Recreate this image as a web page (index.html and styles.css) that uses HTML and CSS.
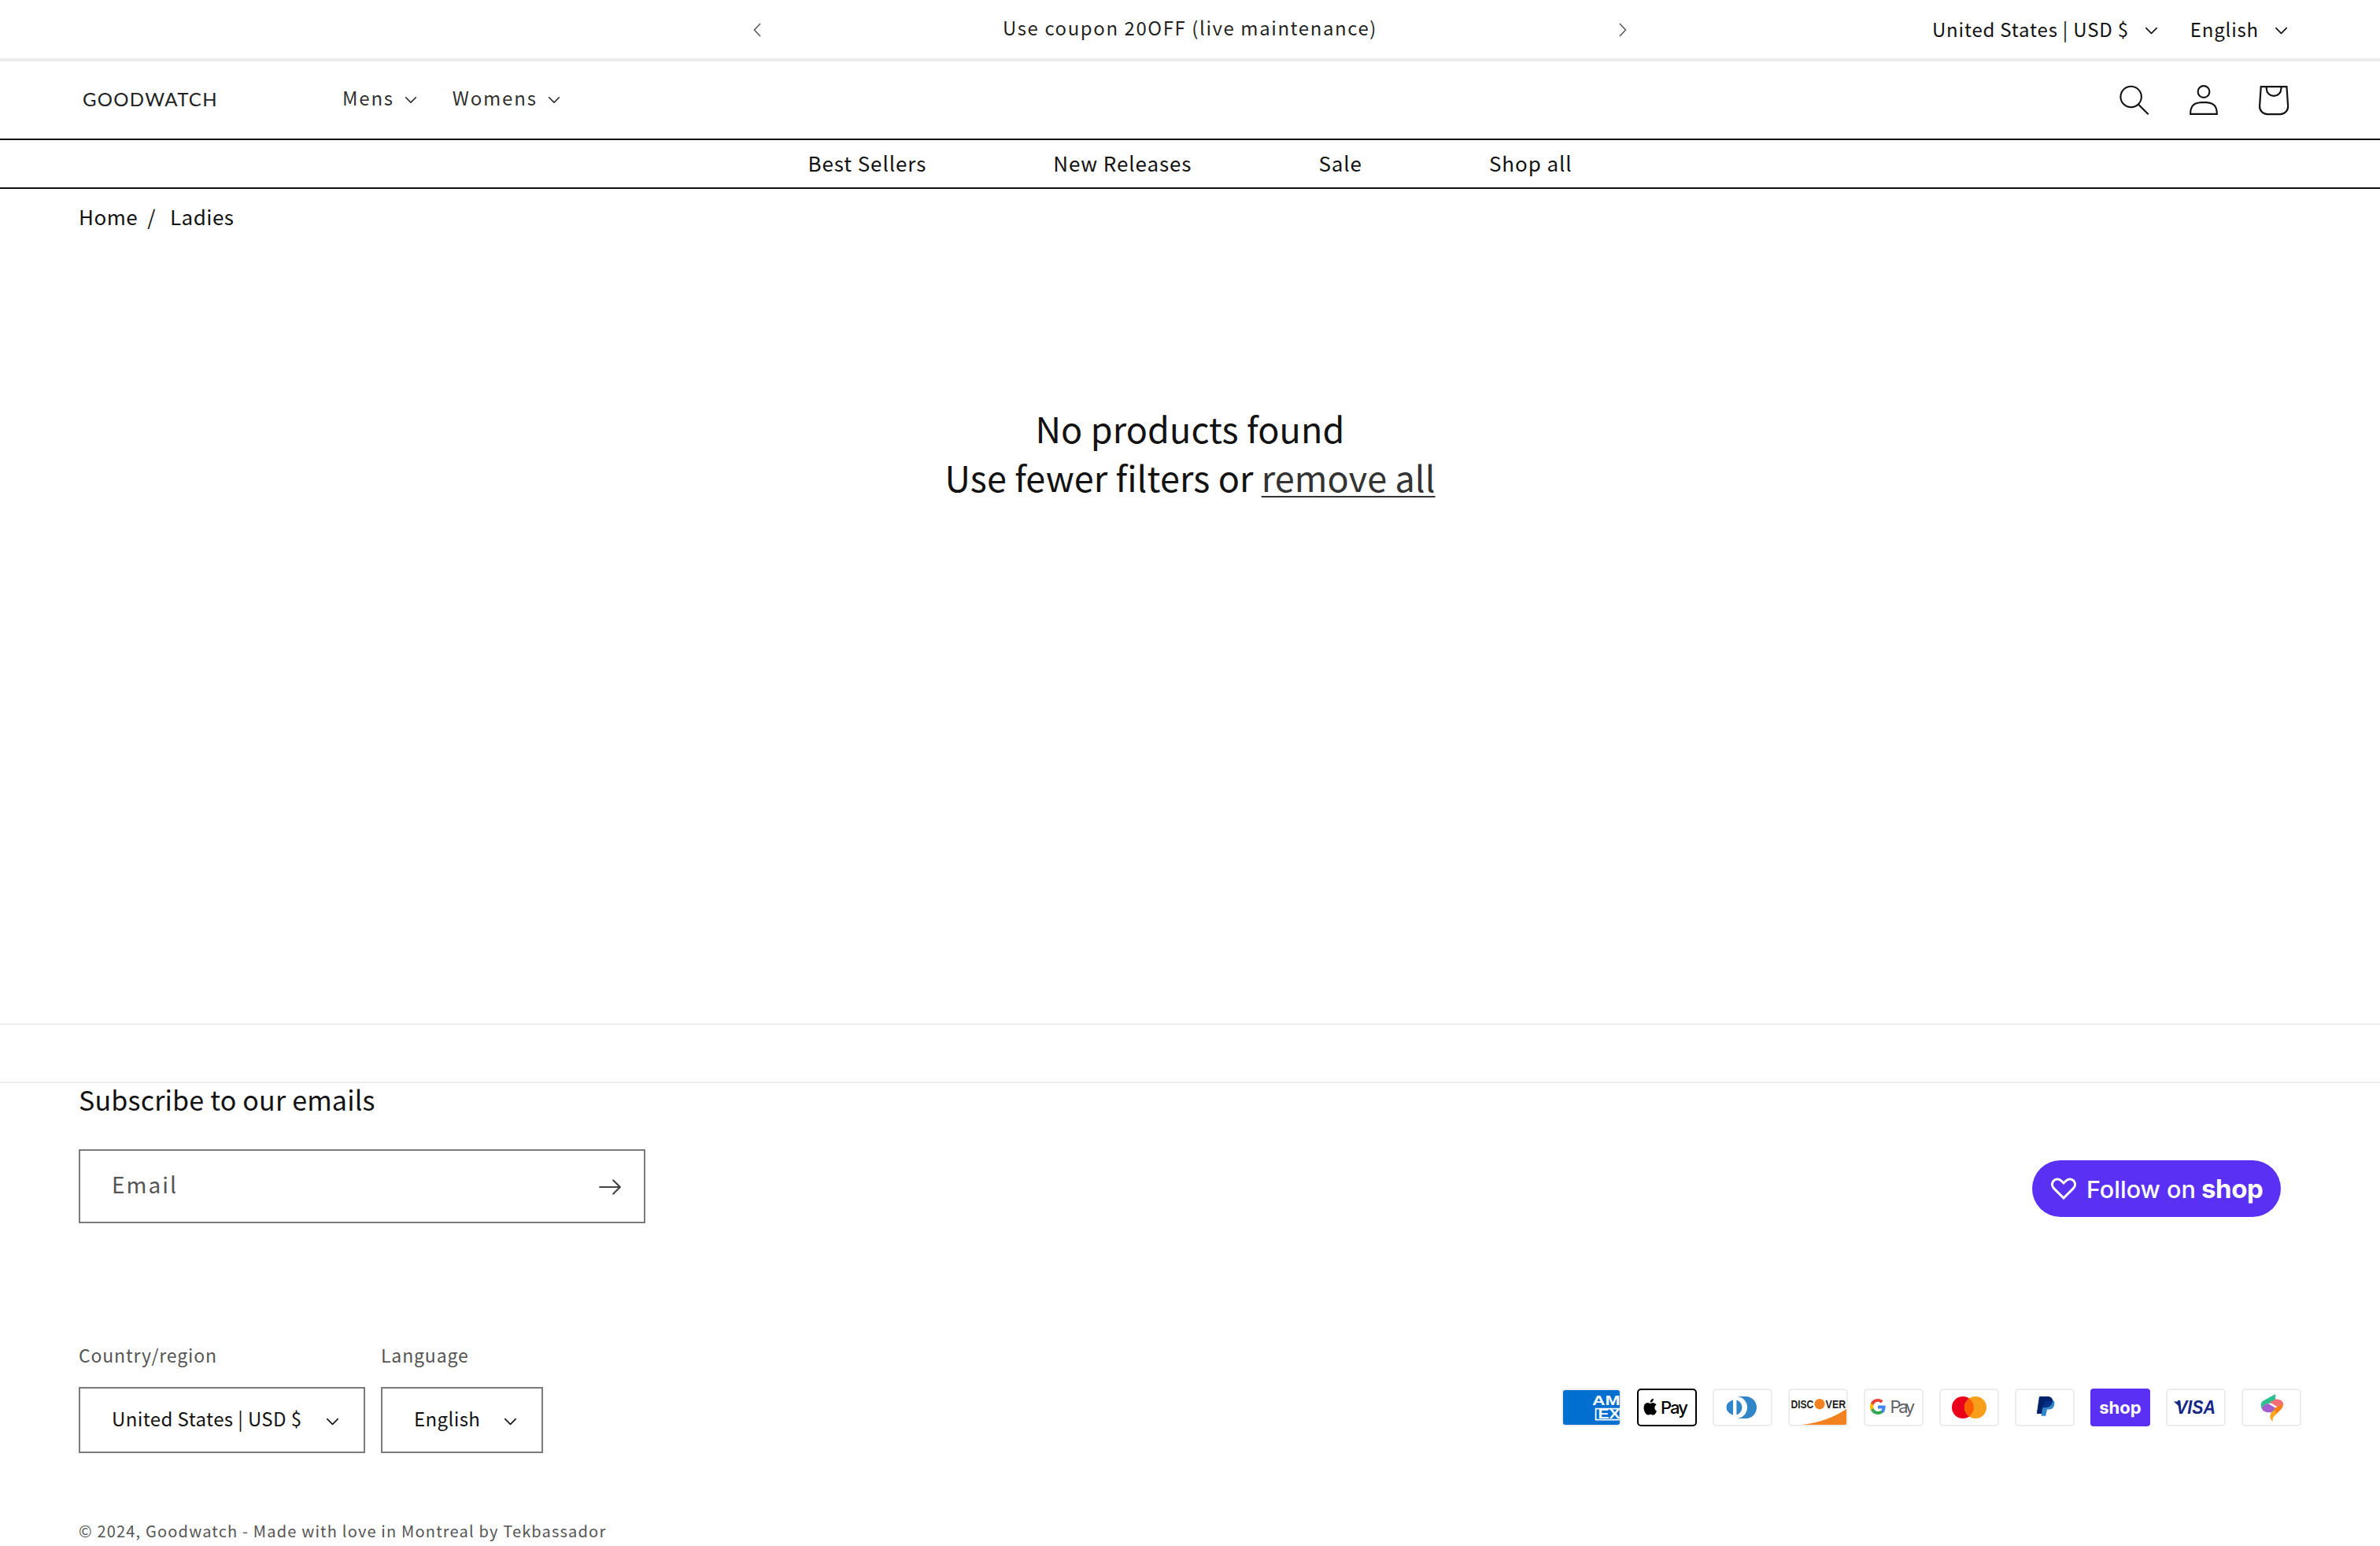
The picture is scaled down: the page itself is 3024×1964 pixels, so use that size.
FILE: index.html
```html
<!DOCTYPE html>
<html lang="en">
<head>
<meta charset="utf-8">
<title>Ladies – Goodwatch</title>
<link rel="stylesheet" href="styles.css">
</head>
<body>
<div class="announce">
  <div class="announce-slider">
    <svg class="chev" viewBox="0 0 10 18"><path d="M9 1 1.500 9 9 17" /></svg>
    <p class="announce-text">Use coupon 20OFF (live maintenance)</p>
    <svg class="chev" viewBox="0 0 10 18"><path d="M1 1 8.500 9 1 17" /></svg>
  </div>
  <div class="locale">
    <span class="locale-item">United States | USD $<svg class="caret" viewBox="0 0 10 6"><path d="M9.354.646a.5.5 0 00-.708 0L5 4.293 1.354.646a.5.5 0 00-.708.708l4 4a.5.5 0 00.708 0l4-4a.5.5 0 000-.708z"/></svg></span>
    <span class="locale-item">English<svg class="caret" viewBox="0 0 10 6"><path d="M9.354.646a.5.5 0 00-.708 0L5 4.293 1.354.646a.5.5 0 00-.708.708l4 4a.5.5 0 00.708 0l4-4a.5.5 0 000-.708z"/></svg></span>
  </div>
</div>
<header class="header">
  <a class="logo">GOODWATCH</a>
  <nav class="menu">
    <span class="menu-item">Mens<svg class="caret small" viewBox="0 0 10 6"><path d="M9.354.646a.5.5 0 00-.708 0L5 4.293 1.354.646a.5.5 0 00-.708.708l4 4a.5.5 0 00.708 0l4-4a.5.5 0 000-.708z"/></svg></span>
    <span class="menu-item">Womens<svg class="caret small" viewBox="0 0 10 6"><path d="M9.354.646a.5.5 0 00-.708 0L5 4.293 1.354.646a.5.5 0 00-.708.708l4 4a.5.5 0 00.708 0l4-4a.5.5 0 000-.708z"/></svg></span>
  </nav>
  <div class="header-icons">
    <svg class="hicon" viewBox="0 0 18 19"><path fill-rule="evenodd" clip-rule="evenodd" d="M11.030 11.680A5.784 5.784 0 112.850 3.500a5.784 5.784 0 018.180 8.180zm.26 1.120a6.780 6.780 0 11.72-.7l5.400 5.400a.5.5 0 11-.71.7l-5.410-5.400z"/></svg>
    <svg class="hicon" viewBox="0 0 18 19"><path fill-rule="evenodd" clip-rule="evenodd" d="M6 4.500a3 3 0 116 0 3 3 0 01-6 0zm3-4a4 4 0 100 8 4 4 0 000-8zm5.580 12.150c1.120.82 1.830 2.240 1.910 4.850H1.510c.08-2.600.79-4.030 1.900-4.850C4.660 11.750 6.500 11.500 9 11.500s4.350.26 5.580 1.150zM9 10.500c-2.500 0-4.650.24-6.170 1.350C1.270 12.980.5 14.930.5 18v.5h17V18c0-3.070-.77-5.020-2.330-6.150-1.520-1.100-3.670-1.350-6.170-1.350z"/></svg>
    <svg class="hicon cart" viewBox="0 0 40 40"><path fill-rule="evenodd" d="m15.750 11.800h-3.160l-.77 11.600a5 5 0 0 0 4.990 5.340h7.380a5 5 0 0 0 4.990-5.330l-.78-11.610zm0 1h-2.220l-.71 10.670a4 4 0 0 0 3.990 4.270h7.380a4 4 0 0 0 4-4.270l-.72-10.670h-2.220v.63a4.750 4.750 0 1 1 -9.500 0zm8.500 0h-7.500v.63a3.750 3.750 0 1 0 7.500 0z"/></svg>
  </div>
</header>
<nav class="subnav">
  <span>Best Sellers</span><span>New Releases</span><span>Sale</span><span>Shop all</span>
</nav>
<div class="crumbs"><span>Home</span><span class="sep">/</span><span>Ladies</span></div>
<main class="empty">
  <p>No products found</p>
  <p>Use fewer filters or <a class="remove">remove all</a></p>
</main>
<div class="band"></div>
<footer class="footer">
  <h2 class="sub-title">Subscribe to our emails</h2>
  <div class="sub-row">
    <div class="email">
      <span>Email</span>
      <svg class="arrow" viewBox="0 0 14 10"><path fill-rule="evenodd" clip-rule="evenodd" d="M8.537.808a.5.5 0 01.817-.162l4 4a.5.5 0 010 .708l-4 4a.5.5 0 11-.708-.708L11.793 5.500H1a.5.5 0 010-1h10.793L8.646 1.354a.5.5 0 01-.109-.546z"/></svg>
    </div>
    <a class="follow">
      <svg class="heart" viewBox="0 0 32 28"><path d="M16 26 3.600 13.600C.6 10.600.9 6.300 3.500 3.900 6.300 1.400 10.500 1.500 13.200 4.200L16 7l2.800-2.800C21.500 1.500 25.700 1.400 28.500 3.900c2.600 2.400 2.900 6.700-.1 9.700z"/></svg>
      <span class="follow-text">Follow on <b>shop</b></span>
    </a>
  </div>
  <div class="foot-row">
    <div class="selects">
      <div class="field">
        <label class="field-label">Country/region</label>
        <div class="select country">United States | USD $<svg class="caret" viewBox="0 0 10 6"><path d="M9.354.646a.5.5 0 00-.708 0L5 4.293 1.354.646a.5.5 0 00-.708.708l4 4a.5.5 0 00.708 0l4-4a.5.5 0 000-.708z"/></svg></div>
      </div>
      <div class="field">
        <label class="field-label">Language</label>
        <div class="select lang">English<svg class="caret" viewBox="0 0 10 6"><path d="M9.354.646a.5.5 0 00-.708 0L5 4.293 1.354.646a.5.5 0 00-.708.708l4 4a.5.5 0 00.708 0l4-4a.5.5 0 000-.708z"/></svg></div>
      </div>
    </div>
    <ul class="pay">
      <li><svg class="payicon" viewBox="0 0 38 24"><rect x=".5" y=".5" width="37" height="23" rx="2" fill="#016fd0" stroke="#ededed"/><text x="19.500" y="10.300" class="amex" textLength="17.800" lengthAdjust="spacingAndGlyphs">AM</text><path d="M21.800 12.800H37.300v7H21.800z" fill="none" stroke="#fff" stroke-width=".9"/><text x="23.200" y="18.800" class="amex" textLength="14" lengthAdjust="spacingAndGlyphs">EX</text></svg></li>
      <li><svg class="payicon" viewBox="0 0 38 24"><rect x=".5" y=".5" width="37" height="23" rx="2" fill="#fff" stroke="#000"/><path d="M9.900 8.100c.4-.5.600-1 .6-1.700-.6 0-1.200.4-1.600.8-.3.4-.6 1-.5 1.600.6.100 1.100-.2 1.500-.7zM10.500 9c-.9-.1-1.600.5-2 .5s-1-.5-1.700-.5c-.9 0-1.700.5-2.100 1.300-.9 1.600-.2 3.900.6 5.200.4.600.9 1.300 1.600 1.300.6 0 .9-.4 1.700-.4s1 .4 1.700.4 1.100-.6 1.500-1.200c.5-.7.700-1.400.7-1.400s-1.300-.5-1.300-2c0-1.300 1-1.900 1.100-1.900-.6-.9-1.500-1-1.800-1z" fill="#000"/><text x="15" y="15.800" class="apay" textLength="17.500">Pay</text></svg></li>
      <li><svg class="payicon" viewBox="0 0 38 24"><rect x=".5" y=".5" width="37" height="23" rx="2" fill="#fff" stroke="#ededed"/><path d="M15 5h6c3.900 0 7 3.100 7 7s-3.100 7-7 7h-6z" fill="#3086c8"/><circle cx="15" cy="12" r="7" fill="#fff"/><path d="M13 7.300v9.400c-2.500-.7-4.200-2.500-4.200-4.700s1.700-4 4.200-4.700zM15.200 7.300c2.100.7 3.500 2.500 3.500 4.700s-1.400 4-3.500 4.700z" fill="#3086c8"/></svg></li>
      <li><svg class="payicon" viewBox="0 0 38 24"><rect x=".5" y=".5" width="37" height="23" rx="2" fill="#fff" stroke="#ededed"/><path d="M9 23c11-1.300 20-4.700 28-10v9a1 1 0 0 1-1 1z" fill="#f48120"/><text x="1.700" y="12.500" class="disc" textLength="14.500" lengthAdjust="spacingAndGlyphs">DISC</text><circle cx="20" cy="9.800" r="3.300" fill="#f48120"/><text x="23.800" y="12.500" class="disc" textLength="12.800" lengthAdjust="spacingAndGlyphs">VER</text></svg></li>
      <li><svg class="payicon" viewBox="0 0 38 24"><rect x=".5" y=".5" width="37" height="23" rx="2" fill="#fff" stroke="#ededed"/><path d="M13.800 11.800c0-.4 0-.8-.1-1.100H9v2h2.700c-.1.700-.5 1.200-1 1.500v1.300h1.600c1-.9 1.500-2.200 1.500-3.700z" fill="#4285f4"/><path d="M9 16.500c1.300 0 2.500-.4 3.300-1.200l-1.600-1.300c-.4.300-1 .5-1.700.5-1.300 0-2.400-.9-2.800-2H4.500v1.300C5.300 15.500 7 16.500 9 16.500z" fill="#34a853"/><path d="M6.200 12.500c-.2-.7-.2-1.300 0-2V9.200H4.500c-.7 1.400-.7 3.100 0 4.600z" fill="#fbbc04"/><path d="M9 8.400c.7 0 1.400.3 1.900.8l1.400-1.400C11.500 7 10.300 6.500 9 6.500c-2 0-3.700 1.100-4.500 2.700l1.700 1.300C6.600 9.300 7.700 8.400 9 8.400z" fill="#ea4335"/><text x="16.800" y="15.500" class="gpay" textLength="15.800">Pay</text></svg></li>
      <li><svg class="payicon" viewBox="0 0 38 24"><rect x=".5" y=".5" width="37" height="23" rx="2" fill="#fff" stroke="#ededed"/><circle cx="15" cy="12" r="7" fill="#eb001b"/><circle cx="23" cy="12" r="7" fill="#f79e1b"/><path d="M19 6.300a7 7 0 0 1 0 11.400 7 7 0 0 1 0-11.400z" fill="#ff5f00"/></svg></li>
      <li><svg class="payicon" viewBox="0 0 38 24"><rect x=".5" y=".5" width="37" height="23" rx="2" fill="#fff" stroke="#ededed"/><path d="M23.900 8.300c.2-1 0-1.700-.6-2.300-.6-.7-1.700-1-3.100-1h-4.100c-.3 0-.5.2-.6.500L14 15.600c0 .2.100.4.300.4H17v-.2l-.2 1.300c0 .2.100.3.300.3h2.100c.3 0 .5-.2.500-.4l.7-3.300c0-.2.300-.4.500-.4h.3c2 0 3.500-.8 3.900-3.200.2-1 .1-1.800-.4-2.400-.1-.2-.2-.3-.4-.4z" fill="#3086c8"/><path d="M23.900 8.300c.2-1 0-1.700-.6-2.300-.6-.7-1.700-1-3.100-1h-4.100c-.3 0-.5.2-.6.500L14 15.600c0 .2.100.4.300.4H17l.7-4.200c.1-.3.300-.5.600-.5h1.200c2.400 0 4.200-1 4.700-3.800z" fill="#012169"/><path d="M19 8.300c0-.2.200-.3.400-.3h3.200c.4 0 .7 0 1 .1l.3.100.3.1C24 8.300 23.900 8.400 23.900 8.300c-.5 2.800-2.300 3.800-4.700 3.800h-1.200c-.3 0-.5.200-.6.500z" fill="#003087"/></svg></li>
      <li><svg class="payicon" viewBox="0 0 38 24"><rect width="38" height="24" rx="2" fill="#5a31f4"/><text x="19" y="15.800" class="shopt">shop</text></svg></li>
      <li><svg class="payicon" viewBox="0 0 38 24"><rect x=".5" y=".5" width="37" height="23" rx="2" fill="#fff" stroke="#ededed"/><text x="6.500" y="16" class="visa" textLength="25" lengthAdjust="spacingAndGlyphs">VISA</text><path d="M5 8.200h4l.4 4z" fill="#142688"/></svg></li>
      <li><svg class="payicon" viewBox="0 0 38 24"><rect x=".5" y=".5" width="37" height="23" rx="2" fill="#fff" stroke="#ededed"/><path d="M21.500 3.500 21.500 9 17 9.500c-2 .3-3 1.500-4.200 3-.8-1.500-.6-3.200.6-4.500z" fill="#2ec08f"/><path d="M12.800 12.500c.6 1.700 2.100 2.600 3.700 2.600H20l2.300-2.400-5.500-3.200c-2 .3-3 1.500-4 3z" fill="#a25fd0"/><path d="M18 8.800 21.500 6.800c1.500 0 3.400.2 4.300 1.300.8 1 .9 1.600.7 2.600L23 11.700z" fill="#fb6f76"/><path d="M26.200 9.800c.3 1.300-.3 2.500-1.200 3.500l-4.400 4.500c-.7.800-1 2-.6 3.200-1.500-1.300-2.300-2.800-1.600-4.500l.5-1.500 2.800-2 2.800-.6z" fill="#f9a825"/><path d="M26.200 9.800c.3 1.300-.3 2.500-1.200 3.500l-2.500 2.500-2-3z" fill="#fb7d16"/></svg></li>
    </ul>
  </div>
  <p class="copy">© 2024, Goodwatch - Made with love in Montreal by Tekbassador</p>
</footer>
</body>
</html>
```
FILE: styles.css
```css
* { box-sizing: border-box; }
html, body { margin: 0; padding: 0; }
html { height: 1964px; overflow: hidden; }
body {
  width: 3024px;
  height: 1964px;
  background: #fff;
  color: #121212;
  font-family: "Noto Sans CJK JP", "Noto Sans", sans-serif;
  overflow: hidden;
}
p, h2, ul { margin: 0; padding: 0; }
li { list-style: none; }
svg { display: block; fill: currentColor; }

.announce {
  height: 78px;
  border-bottom: 4px solid #ececec;
  position: relative;
  display: flex;
  align-items: center;
  justify-content: flex-end;
  padding-right: 117px;
}
.announce-slider {
  position: absolute;
  left: 957px;
  top: 0;
  width: 1110px;
  height: 74px;
  display: flex;
  align-items: center;
  justify-content: space-between;
}
.chev { width: 10px; height: 18px; margin-top: 2px; fill: none; stroke: #555; stroke-width: 1.5; }
.announce-text { font-size: 24px; letter-spacing: 1.57px; line-height: 36px; margin-top: -4px; color: rgba(18,18,18,.95); }
.locale { display: flex; gap: 41px; align-items: center; }
.locale-item { display: flex; align-items: center; gap: 20px; font-size: 24px; letter-spacing: .8px; line-height: 36px; color: #121212; }
.caret { width: 17px; height: 10px; margin-top: 4px; }

.header {
  height: 98px;
  display: flex;
  align-items: center;
  padding: 0 117px 0 105px;
}
.logo { width: 231px; font-family: Lato, sans-serif; font-size: 24px; letter-spacing: 1.3px; line-height: 34px; margin-top: -2px; color: #222; }
.menu {
  display: flex;
  align-self: flex-start;
  height: 98px;
  margin-top: -2px;
  background: #fff;
  width: 400px;
  gap: 45px;
  padding: 0 0 2px 99px;
  align-items: center;
}
.menu-item { display: flex; align-items: center; gap: 13px; font-size: 24px; letter-spacing: 1.8px; line-height: 36px; color: rgba(18,18,18,.9); }
.caret.small { width: 16px; height: 10px; margin-top: 5px; }
.header-icons { margin-left: auto; margin-top: -1px; display: flex; align-items: center; gap: 50px; }
.hicon { width: 38px; height: 40px; }
.hicon.cart { width: 88px; height: 88px; margin: 0 -25px 0 -25px; }

.subnav {
  height: 64px;
  border-top: 2px solid #121212;
  border-bottom: 2px solid #121212;
  display: flex;
  justify-content: center;
  align-items: center;
  gap: 161px;
  font-size: 26px;
  letter-spacing: .9px;
  line-height: 40px;
  padding-bottom: 2px;
}
.crumbs { padding: 15px 100px 0; display: flex; gap: 12px; font-size: 26px; letter-spacing: .5px; line-height: 40px; height: 54px; }
.sep { margin-right: 6px; }

.empty {
  padding-top: 219px;
  text-align: center;
  font-size: 45px;
  line-height: 62px;
  height: 1006px;
  letter-spacing: .1px;
}
.remove { color: #333; text-decoration: underline; text-underline-offset: 5px; text-decoration-thickness: 2px; }
.band { height: 74px; border-top: 2px solid #eee; }

.footer {
  border-top: 2px solid #eee;
  padding: 0 100px;
  height: 590px;
}
.sub-title { font-weight: 400; font-size: 34px; letter-spacing: .2px; line-height: 44px; margin-top: -1px; }
.sub-row { margin-top: 41px; display: flex; justify-content: space-between; align-items: flex-start; padding-right: 26px; }
.email {
  width: 720px; height: 94px; border: 2px solid #7b7b7b;
  display: flex; align-items: center; justify-content: space-between;
  padding: 0 28px 0 40px;
  font-size: 28px; letter-spacing: 2px; color: #555;
}
.email span { margin-top: -6px; }
.arrow { width: 30px; height: 22px; margin-top: 2px; color: #444; }
.follow {
  margin-top: 14px;
  width: 316px; height: 72px; border-radius: 36px; background: #5a31f4; color: #fff;
  display: flex; align-items: center; gap: 13px; padding-left: 24px;
  font-family: Inter, sans-serif; font-size: 30.5px; font-weight: 500; line-height: 40px;
}
.follow b { font-size: 33px; font-weight: 700; margin-left: -1px; letter-spacing: -.4px; }
.heart { width: 32px; height: 28px; fill: none; stroke: #fff; stroke-width: 3; }
.foot-row { margin-top: 151px; display: flex; justify-content: space-between; }
.selects { display: flex; gap: 20px; }
.field-label { display: block; font-size: 23px; letter-spacing: .85px; line-height: 34px; margin-top: -1px; color: #555; margin-bottom: 24px; }
.select {
  height: 84px; border: 2px solid #7b7b7b;
  display: flex; align-items: center; justify-content: space-between;
  font-size: 24px; line-height: 32px; letter-spacing: .4px;
  padding: 0 31px 4px 40px;
}
.select .caret { margin-top: 8px; }
.select.country { width: 364px; }
.select.lang { width: 206px; }
.pay { display: flex; gap: 20px; margin-top: 59px; align-self: flex-start; }
.payicon { width: 76px; height: 48px; }
.amex { font: 700 8.5px "Liberation Sans", sans-serif; fill: #fff; }
.apay { font: 500 11px Inter, sans-serif; fill: #000; }
.disc { font: 700 7.2px "Liberation Sans", sans-serif; fill: #231f20; }
.gpay { font: 400 11px Inter, sans-serif; fill: #5f6368; }
.shopt { font: 700 11px Inter, sans-serif; fill: #fff; text-anchor: middle; }
.visa { font: italic 700 11.5px "Liberation Sans", sans-serif; fill: #142688; }
.copy { margin-top: 84px; font-size: 20px; letter-spacing: 1.18px; line-height: 30px; color: #555; }
```
